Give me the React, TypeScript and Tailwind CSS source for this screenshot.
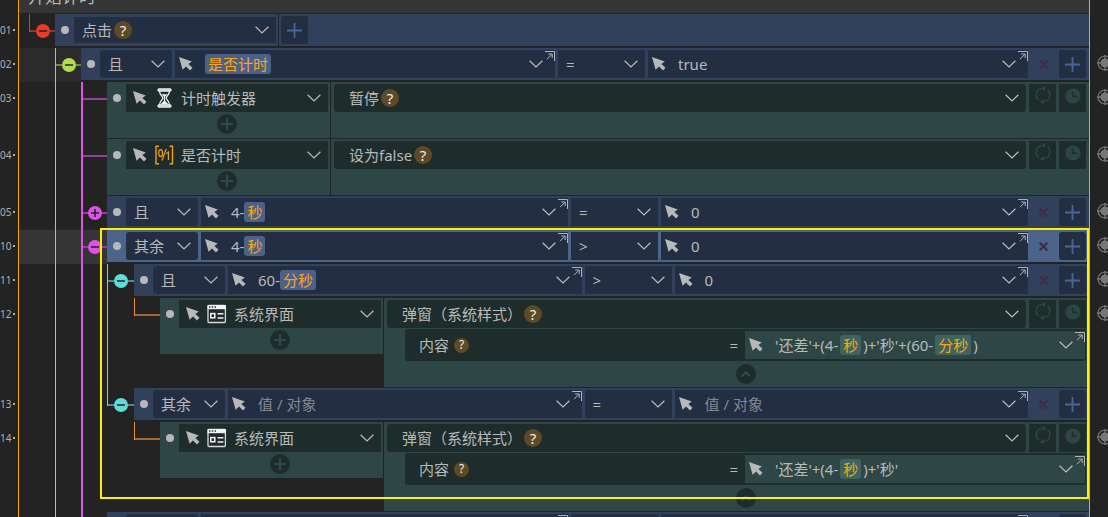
import type { ReactNode } from 'react';
import clsx from 'clsx';

type LaneState = 'none' | 'pass' | 'open' | 'closed' | 'leaf' | 'openEnd' | 'leafEnd';

/* One lane per nesting level of the event tree */
const LANES = [
  { name: 'root', width: 'w-[26px]', bar: 'w-px bg-[#d9402f]', link: 'bg-[#9c3429]', knob: 'bg-[#e83b2a]' },
  { name: 'event', width: 'w-[26px]', bar: 'w-px bg-[#b0cf63]', link: 'bg-[#73893c]', knob: 'bg-[#b1dc50]' },
  { name: 'condition', width: 'w-[26px]', bar: 'w-0.5 bg-[#dd52e8]', link: 'bg-[#94409b]', knob: 'bg-[#dd52e8]' },
  { name: 'branch', width: 'w-[27px]', bar: 'w-px bg-[#5fdcd9]', link: 'bg-[#45918f]', knob: 'bg-[#5fdcd9]' },
  { name: 'action', width: 'w-[26px]', bar: 'w-px bg-[#ec8f3c]', link: 'bg-[#a8662e]', knob: 'bg-[#ec8f3c]' },
];

/* ---------- icons ---------- */

function ChevronIcon() {
  return (
    <svg viewBox="0 0 14 8" className="pointer-events-none h-2 w-3.5 shrink-0" fill="none" stroke="#bdbdbd" strokeWidth="1.2" aria-hidden="true">
      <path d="M.6 .8 7 7 13.4 .8" />
    </svg>
  );
}

function CursorIcon() {
  return (
    <svg viewBox="0 0 14 14" className="size-3.5 shrink-0" fill="#b8b8b8" aria-hidden="true">
      <path d="M0 0 12.8 4.6 9.4 7 13.5 10.8 11 13.5 7 9.4 3.6 12.8Z" />
    </svg>
  );
}

function PopOutIcon() {
  return (
    <svg viewBox="0 0 10 10" className="absolute top-px right-0 size-2.5" fill="none" stroke="#b4b4b4" aria-hidden="true">
      <path d="M0 .5H9.5V10" />
      <path d="M2 8.2 6.8 3.4M3.2 3H7.2V7" />
    </svg>
  );
}

function HourglassIcon() {
  return (
    <svg viewBox="0 0 20 20" className="size-5 shrink-0" fill="none" stroke="#f1f1f1" strokeWidth="1.3" aria-hidden="true">
      <rect x="4" y="1" width="13" height="2" rx="1" fill="#8f9998" />
      <rect x="4" y="17" width="13" height="2" rx="1" fill="#8f9998" />
      <path d="M5.5 3C5.5 7 8.8 8.2 8.8 10S5.5 13 5.5 17M15.5 3C15.5 7 12.2 8.2 12.2 10S15.5 13 15.5 17" />
      <path d="M7.6 6.3H13.4L10.5 9.4ZM6.4 16.4 10.5 12.2 14.6 16.4Z" fill="#f1f1f1" stroke="none" />
      <path d="M10.5 9V14" />
    </svg>
  );
}

function FlagIcon() {
  return (
    <svg viewBox="0 0 20 20" className="size-5 shrink-0" fill="none" stroke="#f0a010" strokeWidth="1.4" aria-hidden="true">
      <path d="M5 1.2H2V18.8H5M15.5 1.2H18.5V18.8H15.5" />
      <ellipse cx="6.6" cy="8.2" rx="1.9" ry="3.5" strokeWidth="1.2" />
      <path d="M12.2 4 8 15.5M12.4 8.6 14.4 7V15" strokeWidth="1.2" />
    </svg>
  );
}

function WindowIcon() {
  return (
    <svg viewBox="0 0 20 20" className="size-5 shrink-0" fill="none" aria-hidden="true">
      <rect x="1" y="1.5" width="17.4" height="17" rx="1" stroke="#d6dada" strokeWidth="1.3" />
      <path d="M.6 1H19V5.2H.6Z" fill="#f2f2f2" />
      <path d="M2 3H3.4M4.8 3H6.2M7.6 3H9" stroke="#22302f" strokeWidth="1.4" />
      <rect x="3.8" y="9.6" width="4" height="4.2" stroke="#f2f2f2" strokeWidth="1.5" />
      <path d="M10.6 9.8H16.4M10.6 14H16.4" stroke="#f2f2f2" strokeWidth="1.4" />
    </svg>
  );
}

function PlusIcon() {
  return (
    <svg viewBox="0 0 15 15" className="size-[15px]" stroke="#496698" strokeWidth="1.8" aria-hidden="true">
      <path d="M7.5 0V15M0 7.5H15" />
    </svg>
  );
}

function RepeatIcon() {
  return (
    <svg viewBox="0 0 18 18" className="size-[18px]" fill="none" stroke="#2c4644" strokeWidth="1.5" aria-hidden="true">
      <path d="M4.6 14.2A6.8 6.8 0 0 1 7.6 2.4M13.4 3.8A6.8 6.8 0 0 1 10.4 15.6" />
      <path d="M8.2 0 12.4 1.8 9 5.2ZM9.8 12.8 5.6 16.2 9.8 18Z" fill="#2c4644" stroke="none" />
    </svg>
  );
}

function ClockIcon() {
  return (
    <svg viewBox="0 0 16 16" className="size-4" aria-hidden="true">
      <circle cx="8" cy="8" r="7.6" fill="#2c4644" />
      <path d="M7.6 3.6V8.2H12" fill="none" stroke="#1e2d2c" strokeWidth="1.6" />
    </svg>
  );
}

function TargetIcon() {
  return (
    <svg viewBox="0 0 16 16" className="size-4 shrink-0" fill="none" stroke="#777" aria-hidden="true">
      <circle cx="8" cy="8" r="7" strokeWidth="1.2" />
      <circle cx="8" cy="8" r="4.6" fill="#777" stroke="none" />
      <path d="M8 0V4M8 12V16M0 8H4M12 8H16" strokeWidth="1.4" />
    </svg>
  );
}

/* ---------- small parts ---------- */

function Dot() {
  return (
    <span className="flex h-8 w-[19px] shrink-0 items-center justify-center">
      <span className="size-2 rounded-full bg-[#b8b8b8]" />
    </span>
  );
}

function Help({ small = false }: { small?: boolean }) {
  return (
    <button
      type="button"
      aria-label="帮助"
      className={clsx(
        'flex shrink-0 items-center justify-center rounded-full bg-[#5f4a26] text-[#eeeeee]',
        small ? 'size-[15px] text-xs' : 'size-[18px] text-[15px]',
      )}
    >
      ?
    </button>
  );
}

function Chip({ children, teal = false }: { children: string; teal?: boolean }) {
  return (
    <span className={clsx('flex h-5 items-center rounded-[3px] px-[3px] text-[#ffa511]', teal ? 'mx-0.5 bg-[#3d6461]' : 'bg-[#4a628a]')}>
      {children}
    </span>
  );
}

function Pick({ label, options }: { label: string; options: string[] }) {
  return (
    <select aria-label={label} className="h-7 min-w-0 flex-1 appearance-none bg-transparent outline-none">
      {options.map((o) => (
        <option key={o}>{o}</option>
      ))}
    </select>
  );
}

function AddButton() {
  return (
    <button type="button" aria-label="添加" className="flex h-7 w-[27px] shrink-0 items-center justify-center rounded-[3px] bg-[#232e42]">
      <PlusIcon />
    </button>
  );
}

function RoundPlus() {
  return (
    <button type="button" aria-label="添加动作" className="flex size-5 items-center justify-center rounded-full bg-[#1e2d2c]">
      <svg viewBox="0 0 12 12" className="size-3" stroke="#2f4a48" strokeWidth="2" aria-hidden="true">
        <path d="M6 0V12M0 6H12" />
      </svg>
    </button>
  );
}

type ValueProps = { label: string; text?: string; children?: ReactNode; teal?: boolean };

function ValueField({ label, text, children, teal = false }: ValueProps) {
  return (
    <div className={clsx('relative flex h-7 min-w-0 flex-1 items-center pr-3 pl-1', teal ? 'bg-[#2e4746]' : 'bg-[#232e42]')}>
      <CursorIcon />
      {children ? (
        <div role="textbox" aria-label={label} className="ml-3 flex flex-1 items-center whitespace-pre">
          {children}
        </div>
      ) : (
        <input
          aria-label={label}
          defaultValue={text}
          placeholder="值 / 对象"
          className="ml-3 min-w-0 flex-1 bg-transparent outline-none placeholder:text-[#85888d]"
        />
      )}
      <button type="button" aria-label={`${label}选项`}>
        <ChevronIcon />
      </button>
      <PopOutIcon />
    </div>
  );
}

/* ---------- rows ---------- */

function Lane({ index, state }: { index: number; state: LaneState }) {
  const lane = LANES[index];
  const ends = state === 'openEnd' || state === 'leafEnd';
  const linked = state !== 'none' && state !== 'pass';
  const knob = state === 'open' || state === 'closed' || state === 'openEnd';
  return (
    <div className={clsx('flex items-start', lane.width)}>
      {state !== 'none' && <span className={clsx('shrink-0', lane.bar, ends ? 'h-[18px]' : 'self-stretch')} />}
      {linked && (
        <span className="flex h-[34px] flex-1 items-center">
          <span className={clsx('h-0.5 flex-1', lane.link)} />
          {knob && (
            <button
              type="button"
              aria-label={state === 'closed' ? '展开' : '收起'}
              className={clsx('flex size-3.5 shrink-0 items-center justify-center rounded-full', lane.knob)}
            >
              <svg viewBox="0 0 8 8" className="size-2" stroke="#232323" strokeWidth="1.5" aria-hidden="true">
                <path d={state === 'closed' ? 'M0 4H8M4 0V8' : 'M0 4H8'} />
              </svg>
            </button>
          )}
          {knob && <span className={clsx('h-0.5 flex-1', lane.link)} />}
        </span>
      )}
    </div>
  );
}

type RowProps = { no: string; lanes: LaneState[]; tone?: string; target?: boolean; children: ReactNode };

function Row({ no, lanes, tone, target = true, children }: RowProps) {
  return (
    <div className="flex">
      <div className="flex h-8 w-[18px] shrink-0 items-center justify-between pr-[3px] text-[10px] text-[#b0b0b0]">
        <span>{no}</span>
        <span className="size-0.5 bg-[#b0b0b0]" />
      </div>
      <div className="flex min-w-0 flex-1 border-l border-[#f5a800]">
        <div className={clsx('flex shrink-0 pl-2.5', tone)}>
          {lanes.map((state, i) => (
            <Lane key={LANES[i].name} index={i} state={state} />
          ))}
        </div>
        <div className="min-w-0 flex-1">{children}</div>
      </div>
      <div className="flex h-[30px] w-[19px] shrink-0 items-center overflow-hidden border-l border-transparent pl-[7px]">
        {target && <TargetIcon />}
      </div>
    </div>
  );
}

type ConditionProps = { joins: string[]; ops: string[]; left?: ReactNode; right?: string; active?: boolean };

function Condition({ joins, ops, left, right, active = false }: ConditionProps) {
  return (
    <div className="pb-0.5">
      <div className={clsx('flex h-8 items-center pr-[3px]', active ? 'bg-[#4b648c]' : 'bg-[#31415b]')}>
        <Dot />
        <div className="flex flex-1 items-center gap-[3px]">
          <div className="flex w-[72px] items-center rounded-[3px] bg-[#232e42] pr-[7px] pl-2">
            <Pick label="连接" options={joins} />
            <ChevronIcon />
          </div>
          <ValueField label="左值">{left}</ValueField>
          <div className="flex w-[87px] items-center bg-[#232e42] pr-[7px] pl-2">
            <Pick label="比较" options={ops} />
            <ChevronIcon />
          </div>
          <ValueField label="右值" text={right} />
          <button type="button" aria-label="删除" className="flex h-7 w-[25px] items-center justify-center">
            <svg viewBox="0 0 8 8" className="size-[9px]" stroke="#3f2b46" strokeWidth="2" aria-hidden="true">
              <path d="M.5 .5 7.5 7.5M7.5 .5 .5 7.5" />
            </svg>
          </button>
          <AddButton />
        </div>
      </div>
    </div>
  );
}

type ActionProps = { icon: ReactNode; object: string; action: string; children?: ReactNode };

function Action({ icon, object, action, children }: ActionProps) {
  return (
    <div className="flex items-start gap-px pb-px">
      <div className="flex h-14 w-[223px] shrink-0 bg-[#2e4746] pr-0.5">
        <Dot />
        <div className="flex flex-1 flex-col items-center gap-0.5 pt-0.5">
          <div className="flex w-full items-center gap-[7px] bg-[#1e2d2c] px-[7px]">
            <CursorIcon />
            {icon}
            <Pick label="对象" options={[object]} />
            <ChevronIcon />
          </div>
          <RoundPlus />
        </div>
      </div>
      <div className="min-h-14 min-w-0 flex-1 bg-[#2e4746] px-[3px] pt-0.5">
        <div className="flex gap-[3px]">
          <div className="flex flex-1 items-center gap-0.5 rounded-[3px] bg-[#1e2d2c] pr-[7px] pl-[15px]">
            <select aria-label="动作" className="field-sizing-content h-7 appearance-none bg-transparent outline-none">
              <option>{action}</option>
            </select>
            <Help />
            <span className="ml-auto flex">
              <ChevronIcon />
            </span>
          </div>
          <button type="button" aria-label="重复" className="flex h-7 w-[27px] items-start justify-center bg-[#1e2d2c] pt-0.5">
            <RepeatIcon />
          </button>
          <button type="button" aria-label="延时" className="flex h-7 w-[27px] items-start justify-center bg-[#1e2d2c] pt-1">
            <ClockIcon />
          </button>
        </div>
        {children}
      </div>
    </div>
  );
}

function Popup({ children }: { children: ReactNode }) {
  return (
    <Action icon={<WindowIcon />} object="系统界面" action="弹窗（系统样式）">
      <div className="ml-[18px] flex flex-col items-center">
        <div className="mt-px grid w-full grid-cols-2 rounded-[3px] bg-[#1e2d2c] py-0.5 pr-px">
          <div className="flex items-center gap-[5px] pr-[7px] pl-3.5">
            <span>内容</span>
            <Help small />
            <span className="ml-auto">=</span>
          </div>
          <ValueField label="内容" teal>
            {children}
          </ValueField>
        </div>
        <button type="button" aria-label="收起参数" className="my-[3px] flex size-5 items-center justify-center rounded-full bg-[#1e2d2c]">
          <svg viewBox="0 0 10 6" className="h-1.5 w-2.5" fill="none" stroke="#35504e" strokeWidth="1.8" aria-hidden="true">
            <path d="M.8 5.4 5 1.2 9.2 5.4" />
          </svg>
        </button>
      </div>
    </Action>
  );
}

const JOINS = ['且', '或', '其余'];
const REST = ['其余', '且', '或'];

export default function App() {
  return (
    <main className="relative flex h-screen flex-col overflow-hidden bg-[#232323] font-['Noto_Sans','Noto_Sans_CJK_SC',sans-serif] text-[15px] leading-5 text-[#b9b9b9]">
      {/* Event title, scrolled half out of view */}
      <header className="mr-[19px] ml-[18px] flex h-3.5 shrink-0 items-end overflow-hidden border-b border-l border-b-[#232323] border-l-[#f5a800] bg-[#353535] pl-[9px]">
        <h1 className="text-[17px] leading-8">开始计时</h1>
      </header>

      <Row no="01" lanes={['openEnd']} target={false}>
        <div className="pb-0.5">
          <div className="flex h-8 items-center bg-[#31415b]">
            <Dot />
            <div className="flex w-[202px] items-center gap-0.5 bg-[#232e42] pr-[7px] pl-2">
              <select aria-label="事件" className="field-sizing-content h-[26px] appearance-none bg-transparent outline-none">
                <option>点击</option>
              </select>
              <Help />
              <span className="ml-auto flex">
                <ChevronIcon />
              </span>
            </div>
            <span className="mx-0.5 w-px self-stretch bg-[#232323]" />
            <AddButton />
          </div>
        </div>
      </Row>

      <Row no="02" lanes={['none', 'open']} tone="bg-[#2b2b2b]">
        <Condition joins={JOINS} ops={['=', '>']} left={<Chip>是否计时</Chip>} right="true" />
      </Row>
      <Row no="03" lanes={['none', 'pass', 'leaf']}>
        <Action icon={<HourglassIcon />} object="计时触发器" action="暂停" />
      </Row>
      <Row no="04" lanes={['none', 'pass', 'leaf']}>
        <Action icon={<FlagIcon />} object="是否计时" action="设为false" />
      </Row>
      <Row no="05" lanes={['none', 'pass', 'closed']}>
        <Condition joins={JOINS} ops={['=', '>']} left={<>4-<Chip>秒</Chip></>} right="0" />
      </Row>
      <Row no="10" lanes={['none', 'pass', 'open']} tone="bg-[#353535]">
        <Condition joins={REST} ops={['>', '=']} left={<>4-<Chip>秒</Chip></>} right="0" active />
      </Row>
      <Row no="11" lanes={['none', 'pass', 'pass', 'open']}>
        <Condition joins={JOINS} ops={['>', '=']} left={<>60-<Chip>分秒</Chip></>} right="0" />
      </Row>
      <Row no="12" lanes={['none', 'pass', 'pass', 'pass', 'leafEnd']}>
        <Popup>
          '还差'+(4-<Chip teal>秒</Chip>)+'秒'+(60-<Chip teal>分秒</Chip>)
        </Popup>
      </Row>
      <Row no="13" lanes={['none', 'pass', 'pass', 'openEnd']} target={false}>
        <Condition joins={REST} ops={['=', '>']} />
      </Row>
      <Row no="14" lanes={['none', 'pass', 'pass', 'none', 'leafEnd']}>
        <Popup>
          '还差'+(4-<Chip teal>秒</Chip>)+'秒'
        </Popup>
      </Row>

      {/* Next row only peeks in at the bottom edge */}
      <Row no="" lanes={['none', 'pass', 'pass']} target={false}>
        <Condition joins={JOINS} ops={['=', '>']} />
      </Row>

      {/* Right edge of the sheet and the marked selection */}
      <div className="pointer-events-none absolute inset-y-0 right-[18px] w-px bg-[#f5a800]" />
      <div className="pointer-events-none absolute top-[228px] right-[19px] left-[100px] h-[271px] border-2 border-[#fff000]" />
    </main>
  );
}
